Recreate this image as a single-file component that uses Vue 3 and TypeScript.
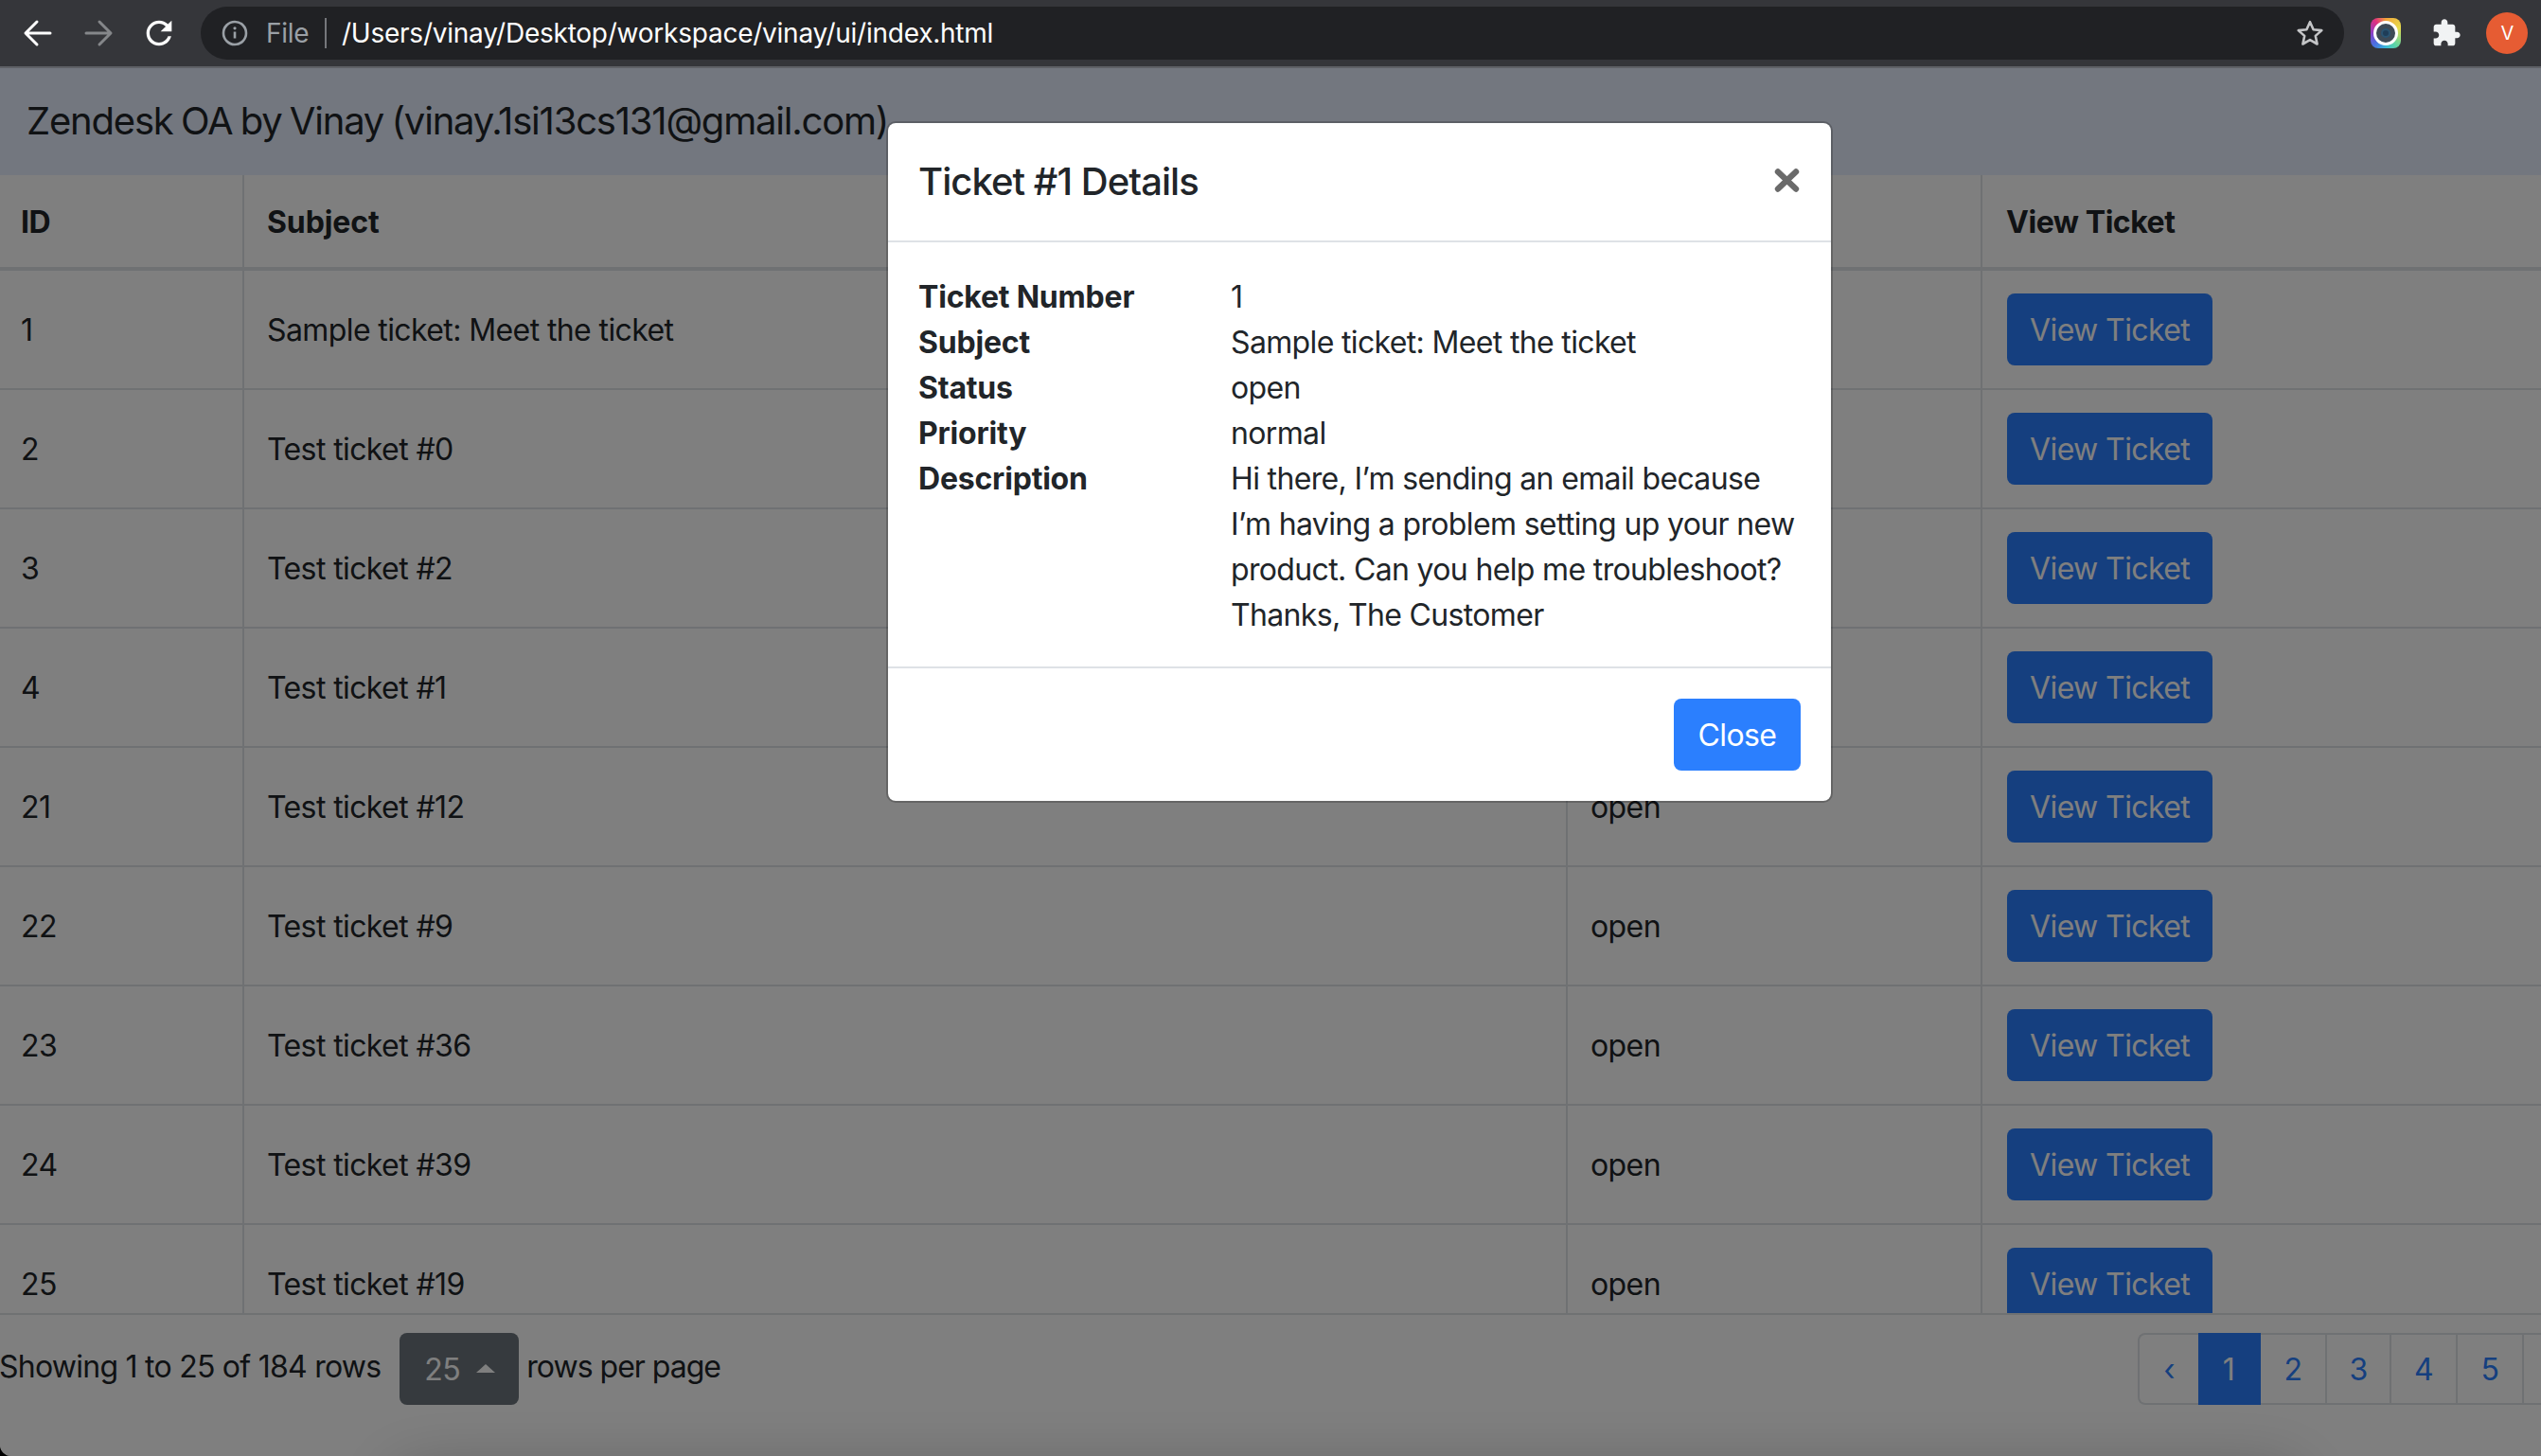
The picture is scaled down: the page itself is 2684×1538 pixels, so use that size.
<script setup lang="ts">
interface Ticket { id: number; subject: string; status: string }
const tickets: Ticket[] = [
  { id: 1, subject: 'Sample ticket: Meet the ticket', status: 'open' },
  { id: 2, subject: 'Test ticket #0', status: 'open' },
  { id: 3, subject: 'Test ticket #2', status: 'open' },
  { id: 4, subject: 'Test ticket #1', status: 'open' },
  { id: 21, subject: 'Test ticket #12', status: 'open' },
  { id: 22, subject: 'Test ticket #9', status: 'open' },
  { id: 23, subject: 'Test ticket #36', status: 'open' },
  { id: 24, subject: 'Test ticket #39', status: 'open' },
  { id: 25, subject: 'Test ticket #19', status: 'open' },
]
const pages = ['1', '2', '3', '4', '5', '6']
const details: [string, string][] = [
  ['Ticket Number', '1'],
  ['Subject', 'Sample ticket: Meet the ticket'],
  ['Status', 'open'],
  ['Priority', 'normal'],
  ['Description', 'Hi there, I’m sending an email because I’m having a problem setting up your new product. Can you help me troubleshoot? Thanks, The Customer'],
]
</script>

<template>
  <div class="page">
    <header class="browser">
      <div class="nav">
        <svg class="nav-icon" viewBox="0 0 40 40"><path d="M33 20H8M19 8 7 20l12 12" fill="none" stroke="#fff" stroke-width="3" stroke-linecap="round" stroke-linejoin="round"/></svg>
        <svg class="nav-icon" viewBox="0 0 40 40"><path d="M7 20h25M21 8l12 12-12 12" fill="none" stroke="#85878a" stroke-width="3" stroke-linecap="round" stroke-linejoin="round"/></svg>
        <svg class="nav-icon" viewBox="0 0 24 24"><path fill="#fff" d="M17.65 6.35C16.2 4.9 14.21 4 12 4c-4.42 0-7.99 3.58-7.99 8s3.57 8 7.99 8c3.73 0 6.84-2.55 7.73-6h-2.08c-.82 2.33-3.04 4-5.65 4-3.31 0-6-2.69-6-6s2.69-6 6-6c1.66 0 3.14.69 4.22 1.78L13 11h7V4l-2.35 2.35z"/></svg>
      </div>
      <div class="omnibox">
        <svg class="info" viewBox="0 0 28 28"><circle cx="14" cy="14" r="12" fill="none" stroke="#9aa0a6" stroke-width="2.6"/><path d="M14 12.5v7" stroke="#9aa0a6" stroke-width="2.6"/><circle cx="14" cy="8.8" r="1.6" fill="#9aa0a6"/></svg>
        <span class="scheme">File</span>
        <span class="sep"></span>
        <span class="url">/Users/vinay/Desktop/workspace/vinay/ui/index.html</span>
        <svg class="star" viewBox="0 0 30 30"><path d="M15 3.2l3.6 8 8.7.9-6.5 5.8 1.8 8.6L15 22.1l-7.6 4.4 1.8-8.6-6.5-5.8 8.7-.9z" fill="none" stroke="#c4c5c7" stroke-width="2.6" stroke-linejoin="round"/></svg>
      </div>
      <div class="ext">
        <div class="lens-app"><div class="lens-ring"><div class="lens-core"></div></div></div>
        <svg class="puzzle" viewBox="0 0 24 24"><path fill="#f1f3f4" d="M20.5 11H19V7c0-1.1-.9-2-2-2h-4V3.5C13 2.12 11.88 1 10.5 1S8 2.12 8 3.5V5H4c-1.1 0-1.99.9-1.99 2v3.8H3.5c1.49 0 2.7 1.21 2.7 2.7s-1.21 2.7-2.7 2.7H2V20c0 1.1.9 2 2 2h3.8v-1.5c0-1.49 1.21-2.7 2.7-2.7 1.49 0 2.7 1.21 2.7 2.7V22H17c1.1 0 2-.9 2-2v-4h1.5c1.38 0 2.5-1.12 2.5-2.5S21.88 11 20.5 11z"/></svg>
        <div class="avatar">V</div>
      </div>
    </header>

    <main class="app">
      <div class="title-bar">Zendesk OA by Vinay (vinay.1si13cs131@gmail.com)</div>
      <div class="table-wrap">
        <table class="tickets">
          <thead>
            <tr>
              <th class="c-id">ID</th>
              <th class="c-subject">Subject</th>
              <th class="c-status">Status</th>
              <th class="c-view">View Ticket</th>
            </tr>
          </thead>
          <tbody>
            <tr v-for="t in tickets" :key="t.id">
              <td class="c-id">{{ t.id }}</td>
              <td class="c-subject">{{ t.subject }}</td>
              <td class="c-status">{{ t.status }}</td>
              <td class="c-view"><button class="btn primary" type="button">View Ticket</button></td>
            </tr>
          </tbody>
        </table>
      </div>
      <footer class="table-foot">
        <div class="summary">
          <span class="showing">Showing 1 to 25 of 184 rows</span>
          <button class="per-page" type="button">25<span class="caret"></span></button>
          <span class="rows-label">rows per page</span>
        </div>
        <nav class="pager">
          <a class="page-link first">‹</a>
          <a v-for="p in pages" :key="p" class="page-link" :class="{ active: p === '1' }">{{ p }}</a>
        </nav>
      </footer>

      <div class="glow"></div>

      <div class="backdrop">
        <section class="modal">
          <div class="modal-head">
            <h2>Ticket #1 Details</h2>
            <svg class="close-x" viewBox="0 0 27 25"><path d="M4 3.5l19 18M23 3.5l-19 18" stroke="#6a6a6a" stroke-width="6.4" stroke-linecap="round"/></svg>
          </div>
          <div class="modal-body">
            <template v-for="d in details" :key="d[0]">
              <strong>{{ d[0] }}</strong>
              <span>{{ d[1] }}</span>
            </template>
          </div>
          <div class="modal-foot">
            <button class="btn close" type="button">Close</button>
          </div>
        </section>
      </div>
    </main>
  </div>
</template>

<style>
html, body { margin: 0; background: #000; }
</style>

<style scoped>
.page {
  width: 2684px;
  height: 1538px;
  display: flex;
  flex-direction: column;
  overflow: hidden;
  font-family: Inter, "Liberation Sans", sans-serif;
  color: #212529;
  font-size: 32px;
  line-height: 48px;
  letter-spacing: -0.6px;
  border-bottom-left-radius: 12px;
  background: #fff;
}
.browser {
  height: 70px;
  flex: none;
  background: #35363a;
  border-bottom: 2px solid #5f6166;
  display: flex;
  align-items: center;
  box-sizing: content-box;
}
.nav { display: flex; width: 212px; padding-left: 20px; box-sizing: border-box; gap: 24px; flex: none; }
.nav-icon { width: 40px; height: 40px; flex: none; }
.omnibox {
  width: 2264px;
  height: 56px;
  flex: none;
  border-radius: 28px;
  background: #202124;
  display: flex;
  align-items: center;
  box-sizing: border-box;
  padding-left: 22px;
  color: #fff;
  font-size: 28px;
  line-height: 56px;
  letter-spacing: -0.24px;
}
.info { width: 28px; height: 28px; margin-right: 19px; flex: none; }
.scheme { color: #9aa0a6; width: 62px; flex: none; }
.sep { width: 2px; height: 32px; background: #75777b; margin-right: 16px; flex: none; }
.url { flex: 1; white-space: nowrap; }
.star { width: 30px; height: 30px; flex: none; margin-right: 21px; }
.ext { display: flex; align-items: center; flex: none; }
.lens-app {
  width: 32px; height: 32px; margin-left: 28px;
  border-radius: 8px;
  background: conic-gradient(#f2a33a, #e6dc4c 70deg, #5ed6a4 140deg, #38b9d8 180deg, #4b6fe0 225deg, #8a3fc8 270deg, #e0307f 320deg, #f2a33a);
  display: flex; align-items: center; justify-content: center;
}
.lens-ring {
  width: 26px; height: 26px; box-sizing: border-box;
  border: 3px solid #fff; border-radius: 50%;
  background: #3e4a56;
  display: flex; align-items: center; justify-content: center;
}
.lens-core { width: 10px; height: 10px; border-radius: 50%; background: #1f3d58; border: 2px solid #2a5472; box-sizing: border-box; }
.puzzle { width: 32px; height: 32px; margin-left: 32px; flex: none; }
.avatar {
  width: 44px; height: 44px; margin-left: 26px;
  border-radius: 50%;
  background: #e65c33;
  color: #fff;
  font-size: 20px;
  line-height: 44px;
  text-align: center;
}
.app { position: relative; flex: 1; display: flex; flex-direction: column; min-height: 0; }
.title-bar {
  height: 113px; flex: none;
  box-sizing: border-box;
  padding: 26px 28px 0;
  background: #e6eeff;
  font-size: 40px;
  line-height: 60px;
  letter-spacing: -1.2px;
  word-spacing: -1.7px;
  white-space: nowrap;
}
.table-wrap { height: 1202px; flex: none; overflow: hidden; }
.tickets { width: 2684px; table-layout: fixed; border-collapse: separate; border-spacing: 0; }
.tickets th, .tickets td {
  box-sizing: border-box;
  padding: 2px 24px 0;
  text-align: left;
  border-bottom: 2px solid #dee2e6;
  border-right: 2px solid #dee2e6;
}
.tickets th { height: 101px; border-bottom-width: 4px; font-weight: 700; letter-spacing: -0.45px; }
.tickets th.c-subject { letter-spacing: -0.1px; }
.tickets td { height: 126px; }
.tickets .c-id { width: 258px; padding-left: 22px; }
.tickets .c-subject { width: 1398px; }
.tickets .c-status { width: 438px; }
.tickets .c-view { border-right: 0; padding-left: 25px; }
.tickets td.c-view { padding-top: 0; padding-left: 26px; }
.btn {
  font: inherit;
  letter-spacing: -0.6px;
  height: 76px;
  box-sizing: border-box;
  padding: 2px 24px 0;
  border: 0;
  border-radius: 8px;
  color: #fff;
  display: inline-block;
  vertical-align: middle;
}
.primary { background: #2b7ffe; }
.table-foot {
  flex: 1;
  border-top: 2px solid #dee2e6;
  padding-top: 19px;
  display: flex;
  align-items: flex-start;
  justify-content: space-between;
  min-height: 0;
  overflow: hidden;
}
.summary { display: flex; align-items: center; height: 76px; white-space: nowrap; margin-left: -1px; }
.showing { margin-right: 20px; position: relative; top: -2px; letter-spacing: -0.75px; }
.rows-label { margin-left: 8px; position: relative; top: -2px; letter-spacing: -1px; }
.per-page {
  font: inherit;
  letter-spacing: inherit;
  width: 126px; height: 76px;
  border: 0;
  border-radius: 8px;
  background: #6c757d;
  color: #fff;
  padding: 2px 0 0 26px;
  text-align: left;
  display: flex;
  align-items: center;
}
.caret {
  width: 0; height: 0;
  margin-left: 17px;
  border-left: 10px solid transparent;
  border-right: 10px solid transparent;
  border-bottom: 9px solid #fff;
  margin-bottom: 4px;
}
.pager { display: flex; height: 76px; flex: none; margin-right: -70px; }
.page-link {
  box-sizing: border-box;
  height: 76px;
  padding: 0 24px;
  line-height: 74px;
  border: 2px solid #dee2e6;
  border-left: 0;
  color: #2b7ffe;
  text-align: center;
  flex: none;
}
.page-link.first { width: 64px; padding: 0; border-left: 2px solid #dee2e6; border-radius: 8px 0 0 8px; border-right: 0; }
.page-link.active { background: #2b7ffe; color: #fff; border-color: #2b7ffe; width: 66px; padding: 0; }
.page-link:nth-child(3), .page-link:nth-child(5), .page-link:nth-child(6) { width: 70px; padding: 0; }
.page-link:nth-child(4) { width: 68px; padding: 0; }
.page-link:nth-child(7) { width: 88px; padding: 0; }
.glow {
  position: absolute;
  left: 430px;
  right: 270px;
  bottom: -60px;
  height: 30px;
  box-shadow: 0 0 70px 10px rgba(0, 0, 0, 0.3);
  background: rgba(0, 0, 0, 0.3);
}
.backdrop {
  position: absolute;
  inset: 0;
  background: rgba(0, 0, 0, 0.5);
  display: flex;
  align-items: flex-start;
}
.modal {
  width: 1000px;
  margin: 56px 0 0 936px;
  box-sizing: border-box;
  background: #fff;
  border: 2px solid rgba(0, 0, 0, 0.2);
  background-clip: padding-box;
  border-radius: 10px;
}
.modal-head {
  display: flex;
  align-items: center;
  justify-content: space-between;
  height: 124px;
  padding: 0 32px;
  border-bottom: 2px solid #dee2e6;
}
.modal-head h2 { margin: 0; font-size: 40px; line-height: 60px; font-weight: 500; letter-spacing: -0.95px; }
.close-x { width: 27px; height: 25px; flex: none; margin-top: -4px; margin-right: 1px; }
.modal-body {
  padding: 34px 32px 30px;
  display: grid;
  grid-template-columns: 330px 1fr;
  letter-spacing: -0.65px;
}
.modal-body strong { font-weight: 700; letter-spacing: -0.2px; }
.modal-foot {
  border-top: 2px solid #dee2e6;
  padding: 32px;
  display: flex;
  justify-content: flex-end;
}
.close { background: #2b7ffe; width: 134px; padding-left: 0; padding-right: 0; }
</style>
